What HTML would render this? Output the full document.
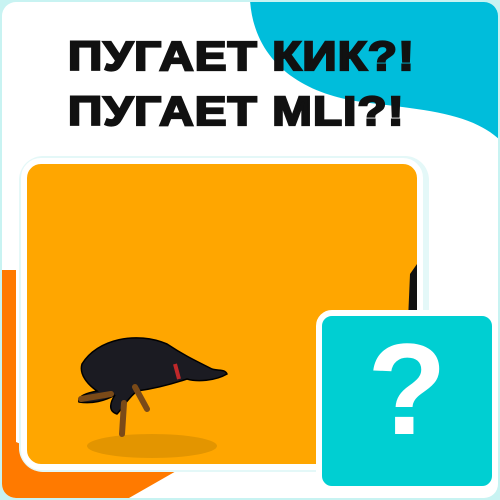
<!DOCTYPE html>
<html><head><meta charset="utf-8"><style>
html,body{margin:0;padding:0;width:500px;height:500px;overflow:hidden;background:#c8f3f2}
.frame{position:absolute;left:2px;top:2px;width:496px;height:496px;border-radius:14px;background:#fff;overflow:hidden}
.blob{position:absolute;left:0;top:0}
.txt{position:absolute;left:66px;top:27px;font-family:"Liberation Sans",sans-serif;font-weight:bold;font-size:41px;line-height:55px;color:#111;-webkit-text-stroke:2.2px #111;letter-spacing:1px;white-space:nowrap;transform:scaleX(1.16);transform-origin:0 0}
.glow{position:absolute;left:17px;top:154px;width:410px;height:316px;border-radius:24px;background:#e4f8f8}
.card{position:absolute;left:19px;top:156px;width:390px;height:300px;border:6px solid #fff;border-radius:20px;background:#ffa600;overflow:hidden}
.q{position:absolute;left:314px;top:308px;width:170px;height:170px;border:6px solid #fff;border-radius:16px;background:#00cfd2}
.q span{position:absolute;left:0;right:0;top:-12px;text-align:center;font-family:"Liberation Sans",sans-serif;font-weight:bold;font-size:130px;line-height:170px;color:#fff}
</style></head><body>
<div class="frame">
<svg class="blob" width="496" height="496">
<path d="M248 -2 C252 60 300 92 360 100 C420 108 470 110 500 140 L500 -2 Z" fill="#00bddb"/>
<path d="M-2 268 L14 268 L14 440 L62 460 L190 460 L120 500 L-2 500 Z" fill="#ff7a00"/>
</svg>
<div class="txt">ПУГАЕТ КИК?!<br>ПУГАЕТ MLI?!</div>
<div class="glow"></div>
<div class="card">
<svg width="390" height="300" style="position:absolute;left:0;top:0">
<ellipse cx="125" cy="282" rx="65" ry="12" fill="#d08a00" opacity=".6"/>
<path d="M383 110 L390 100 L390 180 L380 180 Z" fill="#111"/>
<g transform="translate(0,55)">
<path d="M55 145 C70 120 110 112 140 125 C155 135 165 140 185 150 C192 152 198 150 200 155 C188 162 170 163 160 160 C145 165 125 170 110 172 C100 180 95 190 90 195 C80 192 84 182 88 176 C78 182 65 185 52 183 C50 177 60 174 70 172 C60 165 52 155 55 145 Z" fill="#1b1b22" stroke="#000" stroke-width="1.5"/>
<path d="M54 180 L84 175 M108 168 L120 190 M97 184 L95 215" stroke="#7a4a18" stroke-width="6" stroke-linecap="round"/>
<path d="M148 145 L152 160" stroke="#c0282a" stroke-width="4"/>
</g>
</svg>
</div>
<div class="q"><span>?</span></div>
</div>
</body></html>
